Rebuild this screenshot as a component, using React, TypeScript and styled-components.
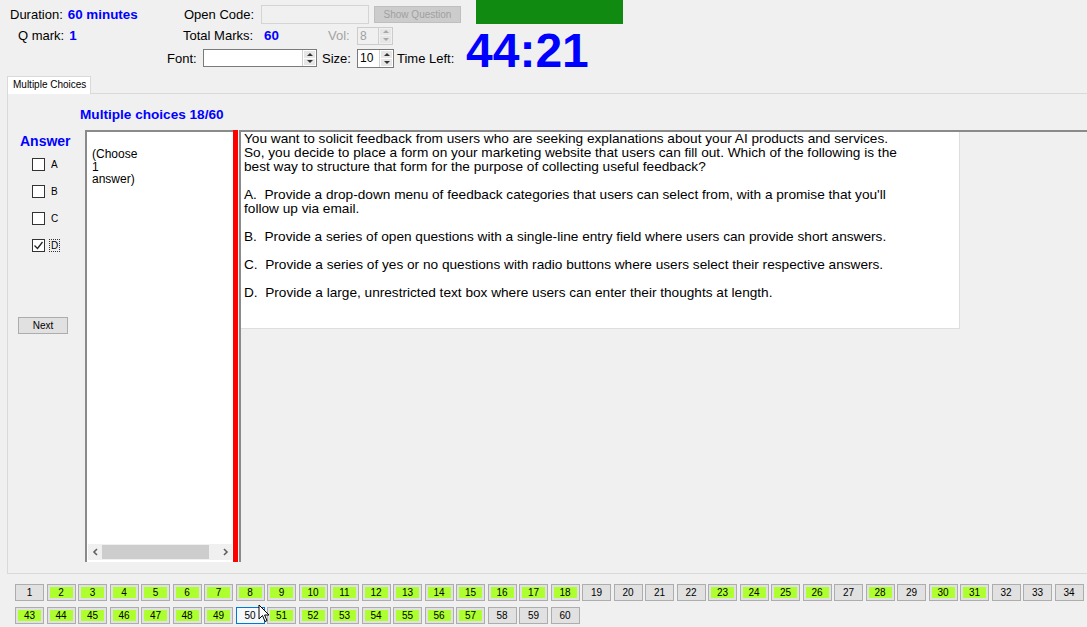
import React from "react";
import styled, { createGlobalStyle } from "styled-components";

const Global = createGlobalStyle`
  html, body { margin: 0; padding: 0; background: #f0f0f0; }
  body { font-family: "Liberation Sans", Arial, sans-serif; font-size: 13px; color: #000; }
  #root { width: 1087px; height: 627px; overflow: hidden; }
  * { box-sizing: border-box; }
`;

const Page = styled.div`
  position: relative;
  width: 1087px;
  height: 627px;
  overflow: hidden;
  display: flex;
  flex-direction: column;
`;

const Header = styled.div`
  height: 76px;
  display: flex;
  flex-direction: column;
`;

const Row1 = styled.div`
  height: 25px;
  padding: 4px 0 0 10px;
  display: flex;
  align-items: center;
`;

const Cell = styled.div<{ $w?: number; $pl?: number; $ml?: number }>`
  ${(p) => (p.$w ? `width: ${p.$w}px;` : "")}
  padding-left: ${(p) => p.$pl ?? 0}px;
  margin-left: ${(p) => p.$ml ?? 0}px;
  flex-shrink: 0;
  display: flex;
  align-items: center;
  gap: 5px;
  white-space: nowrap;
`;

const Label = styled.span<{ $muted?: boolean }>`
  color: ${(p) => (p.$muted ? "#a3a3a3" : "#000")};
`;

const Value = styled.span`
  color: #0000ff;
  font-weight: bold;
  font-size: 13.4px;
`;

const TextBox = styled.div`
  width: 108px;
  height: 19px;
  margin-right: 5px;
  border: 1px solid #d4d4d4;
  background: #f0f0f0;
  flex-shrink: 0;
`;

const DisabledButton = styled.div`
  width: 87px;
  height: 17px;
  margin-right: 15px;
  background: #cccccc;
  border: 1px solid #bfbfbf;
  color: #a0a0a0;
  font-size: 10px;
  line-height: 15px;
  text-align: center;
  flex-shrink: 0;
`;

const GreenBox = styled.div`
  width: 147px;
  height: 24px;
  margin-top: -4px;
  align-self: flex-start;
  background: #108a10;
  flex-shrink: 0;
`;

const LowerRows = styled.div`
  display: flex;
`;

const LeftStack = styled.div`
  width: 466px;
  display: flex;
  flex-direction: column;
`;

const Row2 = styled.div`
  height: 21px;
  display: flex;
  align-items: center;
`;

const Row3 = styled.div`
  height: 24px;
  padding-left: 167px;
  display: flex;
  align-items: center;
`;

const TimeLeft = styled.div`
  margin-top: 2px;
  font-size: 48px;
  line-height: 48px;
  font-weight: bold;
  color: #0000ff;
  white-space: nowrap;
`;

const Spin = styled.div<{ $w: number; $h: number; $disabled?: boolean }>`
  width: ${(p) => p.$w}px;
  height: ${(p) => p.$h}px;
  display: flex;
  flex-shrink: 0;
  border: 1px solid ${(p) => (p.$disabled ? "#cccccc" : "#7a7a7a")};
  background: ${(p) => (p.$disabled ? "#f0f0f0" : "#fff")};
  color: ${(p) => (p.$disabled ? "#a0a0a0" : "#000")};
`;

const SpinText = styled.div`
  flex: 1;
  padding-left: 2px;
  font-size: 12px;
  line-height: 16px;
`;

const SpinButtons = styled.div`
  width: 14px;
  display: flex;
  flex-direction: column;
  border-left: 1px solid #d0d0d0;
  padding: 1px;
  gap: 1px;
`;

const SpinHalf = styled.div<{ $down?: boolean; $disabled?: boolean }>`
  flex: 1;
  background: #e6e6e6;
  display: flex;
  align-items: center;
  justify-content: center;
  &::after {
    content: "";
    border-left: 3px solid transparent;
    border-right: 3px solid transparent;
    ${(p) =>
      p.$down
        ? `border-top: 3px solid ${p.$disabled ? "#a8a8a8" : "#333"};`
        : `border-bottom: 3px solid ${p.$disabled ? "#a8a8a8" : "#333"};`}
  }
`;

const TabStrip = styled.div`
  height: 17px;
  padding-left: 7px;
  display: flex;
`;

const Tab = styled.div`
  width: 84px;
  height: 18px;
  background: #fff;
  border: 1px solid #d9d9d9;
  border-bottom: none;
  font-size: 10px;
  line-height: 15px;
  padding-left: 5px;
  white-space: nowrap;
  position: relative;
  z-index: 1;
`;

const Panel = styled.div`
  margin-left: 7px;
  height: 481px;
  border: 1px solid #d9d9d9;
  border-right: none;
  background: #f0f0f0;
  display: flex;
  flex-direction: column;
`;

const Title = styled.div`
  margin: 13px 0 0 72px;
  height: 16px;
  line-height: 16px;
  font-size: 13.6px;
  font-weight: bold;
  color: #0000ff;
`;

const ContentRow = styled.div`
  margin-top: 7px;
  height: 432px;
  display: flex;
`;

const AnswerCol = styled.div`
  width: 77px;
  display: flex;
  flex-direction: column;
`;

const AnswerHeading = styled.div`
  margin: 3px 0 0 12px;
  height: 16px;
  line-height: 16px;
  font-size: 14px;
  font-weight: bold;
  color: #0000ff;
`;

const CheckList = styled.div`
  margin-top: 2px;
  display: flex;
  flex-direction: column;
`;

const CheckRow = styled.div`
  height: 27px;
  padding-left: 24px;
  display: flex;
  align-items: center;
  gap: 4px;
  font-size: 10px;
`;

const Box = styled.div`
  width: 13px;
  height: 13px;
  border: 1px solid #333;
  background: #fff;
  display: flex;
  align-items: center;
  justify-content: center;
`;

const CheckLabel = styled.span<{ $focus?: boolean }>`
  padding: 0 1px;
  border: 1px ${(p) => (p.$focus ? "dotted #333" : "solid transparent")};
  line-height: 11px;
`;

const NextButton = styled.div`
  margin: 58px 0 0 10px;
  width: 50px;
  height: 17px;
  background: #e1e1e1;
  border: 1px solid #adadad;
  font-size: 10px;
  line-height: 15px;
  text-align: center;
`;

const NoteBox = styled.div`
  width: 148px;
  background: #fff;
  border-top: 2px solid #8a8a8a;
  border-left: 2px solid #8a8a8a;
  display: flex;
  flex-direction: column;
`;

const NoteText = styled.div`
  flex: 1;
  padding: 16px 0 0 5px;
  font-size: 12px;
  line-height: 12.5px;
`;

const HScroll = styled.div`
  height: 16px;
  margin: 0 1px 2px 1px;
  background: #f0f0f0;
  display: flex;
  align-items: center;
`;

const Arrow = styled.div`
  width: 14px;
  height: 16px;
  display: flex;
  align-items: center;
  justify-content: center;
`;

const Thumb = styled.div`
  width: 107px;
  height: 14px;
  background: #cdcdcd;
`;

const Track = styled.div`
  flex: 1;
`;

const RedBar = styled.div`
  width: 5px;
  background: #ff0000;
`;

const QuestionPane = styled.div`
  flex: 1;
  margin-left: 1px;
  border-top: 2px solid #8a8a8a;
  border-left: 2px solid #8a8a8a;
  background: #f0f0f0;
`;

const QuestionBox = styled.div`
  width: 719px;
  height: 197px;
  background: #fff;
  border-right: 1px solid #dedede;
  border-bottom: 1px solid #dedede;
  padding: 0 0 0 3px;
  font-size: 13.65px;
  line-height: 14px;
  white-space: nowrap;
`;

const Para = styled.div`
  margin-bottom: 14px;
`;

const Nav = styled.div`
  margin-top: 10px;
  padding-left: 15px;
  display: flex;
  flex-direction: column;
  gap: 6px;
`;

const NavRow = styled.div`
  display: flex;
  gap: 2.5px;
`;

type NavState = "green" | "gray" | "focus";

const NavBtn = styled.div<{ $state: NavState }>`
  width: 29px;
  height: 17px;
  flex-shrink: 0;
  border: 1px solid ${(p) => (p.$state === "focus" ? "#0078d7" : "#adadad")};
  background: ${(p) => (p.$state === "focus" ? "#f5f9fc" : "#e1e1e1")};
  padding: 2px;
  font-size: 10px;
`;

const NavFill = styled.div<{ $state: NavState }>`
  height: 100%;
  background: ${(p) => (p.$state === "green" ? "#adff2f" : "transparent")};
  text-align: center;
  line-height: 11px;
`;

const Cursor = styled.svg`
  position: absolute;
  left: 258px;
  top: 604px;
`;

const SpinBox: React.FC<{ w: number; h: number; value: string; disabled?: boolean }> = ({
  w,
  h,
  value,
  disabled,
}) => (
  <Spin $w={w} $h={h} $disabled={disabled}>
    <SpinText>{value}</SpinText>
    <SpinButtons>
      <SpinHalf $disabled={disabled} />
      <SpinHalf $down $disabled={disabled} />
    </SpinButtons>
  </Spin>
);

const Chevron: React.FC<{ right?: boolean }> = ({ right }) => (
  <svg width="7" height="8" viewBox="0 0 7 8">
    <polyline
      points={right ? "2,1 5,4 2,7" : "5,1 2,4 5,7"}
      fill="none"
      stroke="#606060"
      strokeWidth="1.6"
    />
  </svg>
);

const greenSet = new Set<number>([
  2, 3, 4, 5, 6, 7, 8, 9, 10, 11, 12, 13, 14, 15, 16, 17, 18, 23, 24, 25, 26, 28, 30, 31,
  43, 44, 45, 46, 47, 48, 49, 51, 52, 53, 54, 55, 56, 57,
]);

const stateOf = (n: number): NavState => (n === 50 ? "focus" : greenSet.has(n) ? "green" : "gray");

const range = (a: number, b: number) => Array.from({ length: b - a + 1 }, (_, i) => a + i);

export default function App() {
  return (
    <Page>
      <Global />
      <Header>
        <Row1>
          <Cell $w={174}>
            <Label>Duration:</Label>
            <Value>60 minutes</Value>
          </Cell>
          <Cell $w={77}>
            <Label>Open Code:</Label>
          </Cell>
          <TextBox />
          <DisabledButton>Show Question</DisabledButton>
          <GreenBox />
        </Row1>
        <LowerRows>
          <LeftStack>
            <Row2>
              <Cell $w={183} $pl={18}>
                <Label>Q mark:</Label>
                <Value>1</Value>
              </Cell>
              <Cell $w={81}>
                <Label>Total Marks:</Label>
              </Cell>
              <Cell $w={64}>
                <Value>60</Value>
              </Cell>
              <Cell $w={29}>
                <Label $muted>Vol:</Label>
              </Cell>
              <SpinBox w={36} h={18} value="8" disabled />
            </Row2>
            <Row3>
              <Cell $w={36}>
                <Label>Font:</Label>
              </Cell>
              <SpinBox w={114} h={18} value="" />
              <Cell $w={35} $ml={5}>
                <Label>Size:</Label>
              </Cell>
              <SpinBox w={37} h={19} value="10" />
              <Cell $ml={3}>
                <Label>Time Left:</Label>
              </Cell>
            </Row3>
          </LeftStack>
          <TimeLeft>44:21</TimeLeft>
        </LowerRows>
      </Header>

      <TabStrip>
        <Tab>Multiple Choices</Tab>
      </TabStrip>
      <Panel>
        <Title>Multiple choices 18/60</Title>
        <ContentRow>
          <AnswerCol>
            <AnswerHeading>Answer</AnswerHeading>
            <CheckList>
              {["A", "B", "C", "D"].map((l) => (
                <CheckRow key={l}>
                  <Box>
                    {l === "D" && (
                      <svg width="11" height="11" viewBox="0 0 11 11">
                        <polyline points="1.5,5.5 4.5,8.5 9.5,2" fill="none" stroke="#222" strokeWidth="1.3" />
                      </svg>
                    )}
                  </Box>
                  <CheckLabel $focus={l === "D"}>{l}</CheckLabel>
                </CheckRow>
              ))}
            </CheckList>
            <NextButton>Next</NextButton>
          </AnswerCol>
          <NoteBox>
            <NoteText>
              (Choose
              <br />1
              <br />
              answer)
            </NoteText>
            <HScroll>
              <Arrow>
                <Chevron />
              </Arrow>
              <Thumb />
              <Track />
              <Arrow>
                <Chevron right />
              </Arrow>
            </HScroll>
          </NoteBox>
          <RedBar />
          <QuestionPane>
            <QuestionBox>
              <Para>
                You want to solicit feedback from users who are seeking explanations about your AI products and services.
                <br />
                So, you decide to place a form on your marketing website that users can fill out. Which of the following is the
                <br />
                best way to structure that form for the purpose of collecting useful feedback?
              </Para>
              <Para>
                A.&nbsp; Provide a drop-down menu of feedback categories that users can select from, with a promise that you'll
                <br />
                follow up via email.
              </Para>
              <Para>B.&nbsp; Provide a series of open questions with a single-line entry field where users can provide short answers.</Para>
              <Para>C.&nbsp; Provide a series of yes or no questions with radio buttons where users select their respective answers.</Para>
              <Para>D.&nbsp; Provide a large, unrestricted text box where users can enter their thoughts at length.</Para>
            </QuestionBox>
          </QuestionPane>
        </ContentRow>
      </Panel>

      <Nav>
        <NavRow>
          {range(1, 34).map((n) => (
            <NavBtn key={n} $state={stateOf(n)}>
              <NavFill $state={stateOf(n)}>{n}</NavFill>
            </NavBtn>
          ))}
        </NavRow>
        <NavRow>
          {range(43, 60).map((n) => (
            <NavBtn key={n} $state={stateOf(n)}>
              <NavFill $state={stateOf(n)}>{n}</NavFill>
            </NavBtn>
          ))}
        </NavRow>
      </Nav>

      <Cursor width="12" height="19" viewBox="0 0 12 19">
        <path d="M1 1 L1 15 L4.5 11.5 L7 17.5 L9 16.6 L6.6 11 L11 11 Z" fill="#fff" stroke="#000" strokeWidth="1" />
      </Cursor>
    </Page>
  );
}
